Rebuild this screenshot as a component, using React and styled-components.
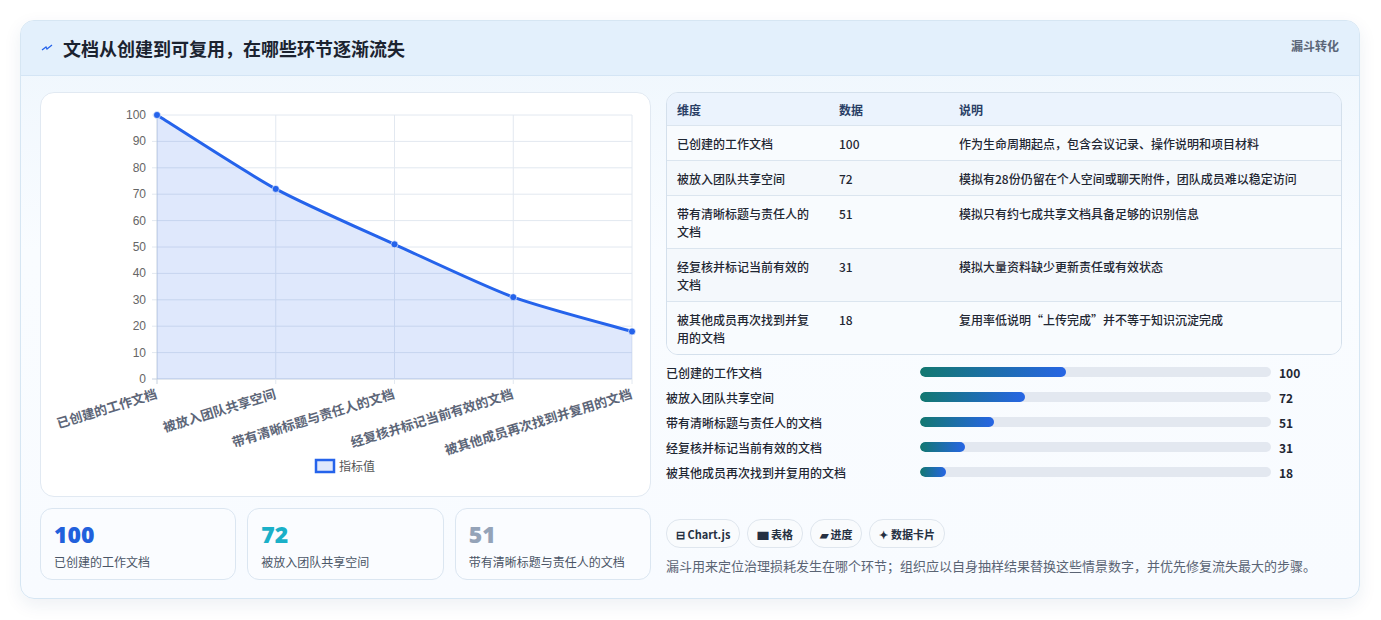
import React from "react";
import styled, { createGlobalStyle } from "styled-components";

const Global = createGlobalStyle`
  body{margin:0;background:#fff;font-family:"Noto Sans CJK SC","Noto Sans",sans-serif;}
`;
const Page = styled.div`padding:20px 21px 20px 20px;`;
const Card = styled.div`
  border:1px solid #d6e6f3;border-radius:14px;overflow:hidden;
  background:linear-gradient(180deg,#eef6fd 0%,#f9fcff 40%,#f8fbff 100%);
  box-shadow:0 6px 18px rgba(30,60,110,.08);
`;
const Header = styled.div`
  height:54px;display:flex;align-items:center;justify-content:space-between;
  padding:0 20px;background:#e3f0fc;border-bottom:1px solid #d4e5f5;
`;
const Title = styled.h1`margin:0;font-size:18px;font-weight:700;color:#1b2330;display:flex;align-items:center;gap:10px;`;
const Tag = styled.span`font-size:12px;font-weight:700;color:#5b6678;align-self:flex-start;margin-top:16px;`;
const Body = styled.div`display:grid;grid-template-columns:611px 676px;gap:15px;padding:16px 19px 18px 19px;`;
const Col = styled.div`display:flex;flex-direction:column;gap:11px;`;
const Panel = styled.div`background:#fff;border:1px solid #e1e9f2;border-radius:14px;height:403px;`;
const Stats = styled.div`display:grid;grid-template-columns:repeat(3,1fr);gap:11px;`;
const Stat = styled.div`border:1px solid #dbe6f1;border-radius:12px;background:#fafcff;height:72px;padding:12px 13px;box-sizing:border-box;`;
const StatNum = styled.div`font-size:23px;font-weight:800;line-height:26px;color:${p=>p.c};font-family:"Open Sans","Noto Sans",sans-serif;`;
const StatLbl = styled.div`font-size:12px;color:#4a5566;margin-top:6px;`;
const Table = styled.div`border:1px solid #d4e0ec;border-radius:12px;overflow:hidden;background:#f6fafe;`;
const Row = styled.div`
  display:grid;grid-template-columns:162px 120px 1fr;padding:0 10px;
  min-height:${p=>p.h}px;align-items:start;box-sizing:border-box;padding-top:${p=>p.head?8:9}px;
  background:${p=>p.head?"#ebf3fd":p.alt?"#f4f8fc":"#f8fbfe"};
  border-top:${p=>p.head?"none":"1px solid #dbe5ef"};
  font-size:12px;line-height:18px;font-weight:${p=>p.head?700:500};color:${p=>p.head?"#2a3f66":"#1f2733"};
`;
const Bars = styled.div`display:flex;flex-direction:column;gap:7px;margin-top:8px;`;
const BarRow = styled.div`display:grid;grid-template-columns:254px 351px 1fr;align-items:center;height:18px;`;
const BarLbl = styled.span`font-size:12px;color:#1f2733;font-weight:500;`;
const Track = styled.div`height:10px;border-radius:5px;background:#e3e8f0;overflow:hidden;`;
const Fill = styled.div`height:100%;border-radius:5px;background:linear-gradient(90deg,#137870,#2765e4);`;
const BarVal = styled.span`font-size:12px;font-weight:700;color:#1f2733;padding-left:8px;`;
const Chips = styled.div`display:flex;gap:7px;margin-top:38px;`;
const Chip = styled.span`border:1px solid #dfe6ee;border-radius:14px;background:#f9fbfd;height:27px;padding:0 9px;display:flex;align-items:center;font-size:11px;font-weight:600;color:#253042;gap:3px;`;
const Note = styled.p`margin:8px 0 0;font-size:13px;color:#5a6474;`;

const labels=["已创建的工作文档","被放入团队共享空间","带有清晰标题与责任人的文档","经复核并标记当前有效的文档","被其他成员再次找到并复用的文档"];
const vals=[100,72,51,31,18];
const desc=["作为生命周期起点，包含会议记录、操作说明和项目材料","模拟有28份仍留在个人空间或聊天附件，团队成员难以稳定访问","模拟只有约七成共享文档具备足够的识别信息","模拟大量资料缺少更新责任或有效状态","复用率低说明“上传完成”并不等于知识沉淀完成"];
const tLabels=["已创建的工作文档","被放入团队共享空间","带有清晰标题与责任人的\n文档","经复核并标记当前有效的\n文档","被其他成员再次找到并复\n用的文档"];

function Chart(){
  const x0=116,x1=591,y0=22,y1=286;
  const X=i=>x0+i*(x1-x0)/4, Y=v=>y1-(v/100)*(y1-y0);
  const pts=vals.map((v,i)=>[X(i),Y(v)]);
  let d=`M${pts[0][0]},${pts[0][1]}`;
  for(let i=1;i<pts.length;i++){
    const p0=pts[i-2]||pts[i-1],p1=pts[i-1],p2=pts[i],p3=pts[i+1]||p2,t=0.12;
    d+=` C${p1[0]+(p2[0]-p0[0])*t},${p1[1]+(p2[1]-p0[1])*t} ${p2[0]-(p3[0]-p1[0])*t},${p2[1]-(p3[1]-p1[1])*t} ${p2[0]},${p2[1]}`;
  }
  const f={fontFamily:"'Liberation Sans',Arial,'Noto Sans CJK SC',sans-serif"};
  return (
    <svg width="609" height="401" style={{display:"block"}}>
      {[0,10,20,30,40,50,60,70,80,90,100].map(v=>(
        <g key={v}>
          <line x1={x0-5} x2={x1} y1={Y(v)} y2={Y(v)} stroke={v===0?"#c5d0de":"#e2e8f0"}/>
          <text x={x0-11} y={Y(v)+4} fontSize="12" fill="#666" textAnchor="end" style={f}>{v}</text>
        </g>))}
      {[0,1,2,3,4].map(i=><line key={i} x1={X(i)} x2={X(i)} y1={y0} y2={y1+5} stroke={i===0?"#c5d0de":"#e2e8f0"}/>)}
      <path d={`${d} L${x1},${y1} L${x0},${y1} Z`} fill="rgba(37,99,235,0.15)"/>
      <path d={d} fill="none" stroke="#2563eb" strokeWidth="3"/>
      {pts.map(([x,y],i)=><circle key={i} cx={x} cy={y} r="3.5" fill="#2563eb" stroke="#fff" strokeWidth="0.6"/>)}
      {labels.map((l,i)=>(
        <text key={i} x={X(i)+1} y={y1+19} fontSize="13" fontWeight="700" fill="#5d6678" textAnchor="end"
          transform={`rotate(-17 ${X(i)+1} ${y1+19})`} style={f}>{l}</text>))}
      <rect x="275" y="367" width="18" height="12" fill="rgba(37,99,235,0.15)" stroke="#2563eb" strokeWidth="2.5"/>
      <text x="298" y="378" fontSize="12" fill="#555" style={f}>指标值</text>
    </svg>
  );
}

export default function App(){
  return (<>
    <Global/>
    <Page><Card>
      <Header>
        <Title><svg width="12" height="10" viewBox="0 0 12 10"><path d="M1 7 L5 4 L6 6 L11 2" stroke="#2563eb" strokeWidth="1.3" fill="none"/></svg>文档从创建到可复用，在哪些环节逐渐流失</Title>
        <Tag>漏斗转化</Tag>
      </Header>
      <Body>
        <Col>
          <Panel><Chart/></Panel>
          <Stats>
            <Stat><StatNum c="#2160dc">100</StatNum><StatLbl>已创建的工作文档</StatLbl></Stat>
            <Stat><StatNum c="#1ab0c8">72</StatNum><StatLbl>被放入团队共享空间</StatLbl></Stat>
            <Stat><StatNum c="#94a3b8">51</StatNum><StatLbl>带有清晰标题与责任人的文档</StatLbl></Stat>
          </Stats>
        </Col>
        <Col style={{gap:0}}>
          <Table>
            <Row head h={32}><span>维度</span><span>数据</span><span>说明</span></Row>
            {tLabels.map((l,i)=>(
              <Row key={i} h={i<2?35:53} alt={i%2===1}>
                <span style={{whiteSpace:"pre-line"}}>{l}</span><span>{vals[i]}</span><span>{desc[i]}</span>
              </Row>))}
          </Table>
          <Bars>
            {labels.map((l,i)=>(
              <BarRow key={i}><BarLbl>{l}</BarLbl><Track><Fill style={{width:`${vals[i]*0.416}%`}}/></Track><BarVal>{vals[i]}</BarVal></BarRow>))}
          </Bars>
          <Chips>
            <Chip>⊟ Chart.js</Chip><Chip>▆ 表格</Chip><Chip>▰ 进度</Chip><Chip>✦ 数据卡片</Chip>
          </Chips>
          <Note>漏斗用来定位治理损耗发生在哪个环节；组织应以自身抽样结果替换这些情景数字，并优先修复流失最大的步骤。</Note>
        </Col>
      </Body>
    </Card></Page>
  </>);
}
